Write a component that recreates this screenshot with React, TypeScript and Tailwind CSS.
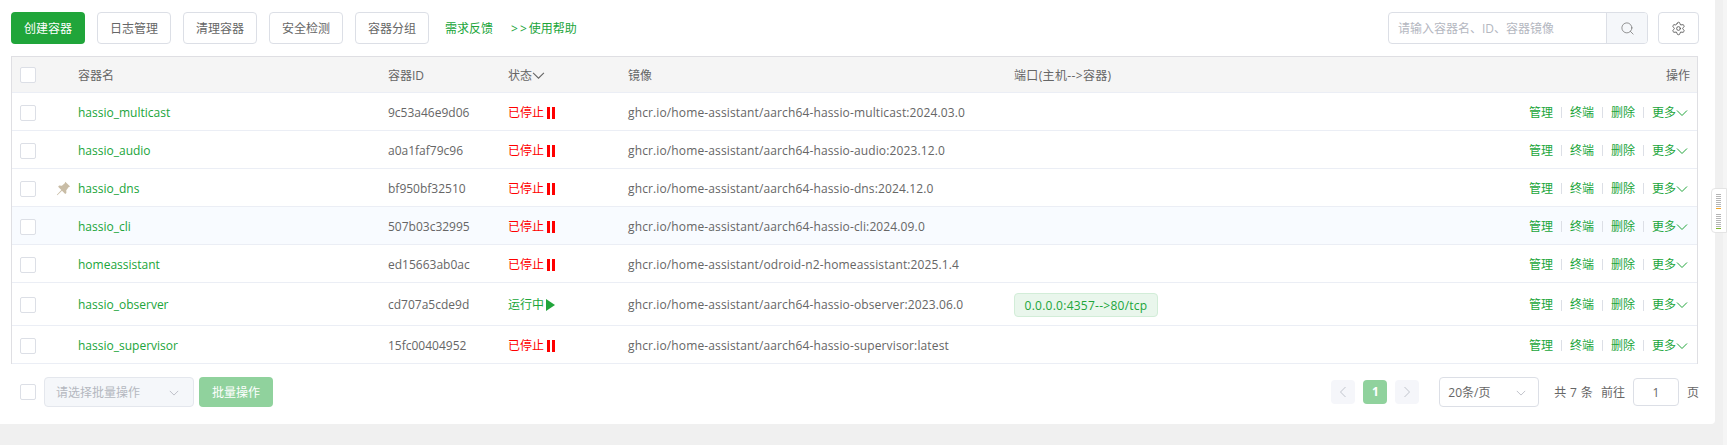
import React from "react";
import { Search, Settings } from "lucide-react";

const Chevron = ({ className = "" }: { className?: string }) => (
  <svg viewBox="0 0 12 12" className={className} fill="none" stroke="currentColor" strokeWidth="1">
    <path d="M1 3.5 6 8.5 11 3.5" />
  </svg>
);

const Check = () => <span className="block w-4 h-4 shrink-0 bg-white border border-[#dcdfe6] rounded-[2px]" />;

const Pin = () => (
  <svg viewBox="0 0 14 14" className="w-[15px] h-[15px]" fill="#c9bda6">
    <path d="M8.6.8 13.2 5.2 11.9 5.7 9.6 8.6 9.7 11.2 8.6 12.1 5.6 9 1.2 13.2.8 12.8 5 8.4 2 5.4 2.9 4.3 5.5 4.4 8.2 2.1Z" />
  </svg>
);

type Row = { name: string; id: string; image: string; run?: boolean; pin?: boolean; hover?: boolean };

const rows: Row[] = [
  { name: "hassio_multicast", id: "9c53a46e9d06", image: "ghcr.io/home-assistant/aarch64-hassio-multicast:2024.03.0" },
  { name: "hassio_audio", id: "a0a1faf79c96", image: "ghcr.io/home-assistant/aarch64-hassio-audio:2023.12.0" },
  { name: "hassio_dns", id: "bf950bf32510", image: "ghcr.io/home-assistant/aarch64-hassio-dns:2024.12.0", pin: true },
  { name: "hassio_cli", id: "507b03c32995", image: "ghcr.io/home-assistant/aarch64-hassio-cli:2024.09.0", hover: true },
  { name: "homeassistant", id: "ed15663ab0ac", image: "ghcr.io/home-assistant/odroid-n2-homeassistant:2025.1.4" },
  { name: "hassio_observer", id: "cd707a5cde9d", image: "ghcr.io/home-assistant/aarch64-hassio-observer:2023.06.0", run: true },
  { name: "hassio_supervisor", id: "15fc00404952", image: "ghcr.io/home-assistant/aarch64-hassio-supervisor:latest" },
];

const Status = ({ run }: { run?: boolean }) =>
  run ? (
    <span className="flex items-center text-[#20a53a]">
      运行中
      <svg viewBox="0 0 9 12" className="w-[9px] h-[12px] ml-[2px]" fill="#20a53a">
        <path d="M0 0 9 6 0 12Z" />
      </svg>
    </span>
  ) : (
    <span className="flex items-center text-[#ff0000]">
      已停止
      <span className="flex gap-[2px] ml-[3px]">
        <span className="w-[3px] h-3 bg-[#ff0000]" />
        <span className="w-[3px] h-3 bg-[#ff0000]" />
      </span>
    </span>
  );

const Sep = () => <span className="w-px h-[11px] bg-[#dcdfe6] mx-2" />;

const Actions = () => (
  <div className="flex items-center justify-end pr-[9px] text-[#20a53a]">
    <span>管理</span>
    <Sep />
    <span>终端</span>
    <Sep />
    <span>删除</span>
    <Sep />
    <span>更多</span>
    <Chevron className="w-3 h-3" />
  </div>
);

const gridCols = "grid grid-cols-[66px_310px_120px_120px_386px_300px_1fr] items-center";

const Btn = ({ children }: { children: React.ReactNode }) => (
  <button className="w-[74px] h-8 pt-[2px] bg-white border border-[#dcdfe6] rounded text-[#666]">{children}</button>
);

const grayLines = ["a", "b", "c", "d", "e", "f", "g"];

export default function App() {
  return (
    <div
      className="relative w-[1727px] h-[445px] overflow-hidden bg-[#f0f0f0] text-xs text-[#666]"
      style={{ fontFamily: '"Open Sans","Noto Sans CJK SC",sans-serif' }}
    >
      <div className="w-[1715px] h-[424px] bg-white rounded-br pl-[11px] pr-[17px]">
        <div className="flex justify-between items-center pt-3 -mr-px">
          <div className="flex items-center gap-3">
            <button className="w-[74px] h-8 pt-[2px] bg-[#20a53a] rounded text-white">创建容器</button>
            <Btn>日志管理</Btn>
            <Btn>清理容器</Btn>
            <Btn>安全检测</Btn>
            <Btn>容器分组</Btn>
            <span className="ml-1 pt-[2px] text-[#20a53a]">需求反馈</span>
            <span className="ml-[6px] pt-[2px] text-[#20a53a]">
              <span className="tracking-[2px]">&gt;&gt;</span>使用帮助
            </span>
          </div>
          <div className="flex items-center gap-[10px]">
            <div className="flex w-[260px] h-8 border border-[#dcdfe6] rounded overflow-hidden">
              <span className="flex-1 flex items-center pl-[9px] pt-[2px] text-[#b4b7bf]">请输入容器名、ID、容器镜像</span>
              <span className="w-[41px] flex items-center justify-center bg-[#f5f7fa] border-l border-[#dcdfe6]">
                <Search className="w-[15px] h-[15px] text-[#777]" strokeWidth={1.25} />
              </span>
            </div>
            <button className="w-[41px] h-8 flex items-center justify-center border border-[#dcdfe6] rounded text-[#555]">
              <Settings className="w-[15px] h-[15px]" strokeWidth={1.4} />
            </button>
          </div>
        </div>

        <div className="mt-3 border-x border-t border-[#dfdfe3]">
          <div className={`${gridCols} h-[36px] pt-[2px] bg-[#f5f5f5] border-b border-[#ebeef5]`}>
            <div className="pl-2 -mt-[2px]">
              <Check />
            </div>
            <div>容器名</div>
            <div>容器ID</div>
            <div className="flex items-center">
              状态
              <Chevron className="w-[13px] h-[13px]" />
            </div>
            <div>镜像</div>
            <div className="tracking-[0.35px]">端口(主机--&gt;容器)</div>
            <div className="text-right pr-[7px]">操作</div>
          </div>
          {rows.map((r) => (
            <div
              key={r.name}
              className={`${gridCols} ${r.run ? "h-[43px]" : "h-[38px]"} pt-[2px] border-b border-[#ebeef5] ${r.hover ? "bg-[#f8fbff]" : "bg-white"}`}
            >
              <div className="flex items-center pl-2">
                <Check />
                {r.pin && (
                  <span className="ml-[20px]">
                    <Pin />
                  </span>
                )}
              </div>
              <div className="text-[#20a53a]">{r.name}</div>
              <div>{r.id}</div>
              <div>
                <Status run={r.run} />
              </div>
              <div className="tracking-[0.13px]">{r.image}</div>
              <div>
                {r.run && (
                  <span className="inline-flex items-center justify-center w-[144px] h-6 pt-px tracking-[0.25px] bg-[#e9f6ec] border border-[#d2edd8] rounded text-[#20a53a]">
                    0.0.0.0:4357--&gt;80/tcp
                  </span>
                )}
              </div>
              <Actions />
            </div>
          ))}
        </div>

        <div className="flex items-center justify-between mt-[13px] h-[30px] -mr-px">
          <div className="flex items-center">
            <div className="pl-[9px]">
              <Check />
            </div>
            <div className="ml-2 w-[150px] h-[30px] flex items-center justify-between pl-[11px] pr-[14px] pt-[2px] bg-[#f5f7fa] border border-[#e4e7ed] rounded text-[#b4b7bf]">
              请选择批量操作
              <Chevron className="w-[10px] h-[10px] text-[#b4b7bf]" />
            </div>
            <button className="ml-[5px] w-[74px] h-[30px] pt-[2px] bg-[#90d29d] rounded text-white">批量操作</button>
          </div>
          <div className="flex items-center">
            <span className="w-6 h-6 flex items-center justify-center bg-[#f5f6fa] rounded-sm text-[#c0c4cc]">
              <Chevron className="w-3 h-3 rotate-90" />
            </span>
            <span className="w-6 h-6 ml-2 flex items-center justify-center bg-[#90d29d] rounded-sm text-white font-bold">1</span>
            <span className="w-6 h-6 ml-2 flex items-center justify-center bg-[#f5f6fa] rounded-sm text-[#c0c4cc]">
              <Chevron className="w-3 h-3 -rotate-90" />
            </span>
            <div className="ml-5 w-[100px] h-[30px] flex items-center justify-between pl-2 pr-3 pt-px border border-[#dcdfe6] rounded">
              20条/页
              <Chevron className="w-[10px] h-[10px] text-[#b4b7bf]" />
            </div>
            <span className="ml-[15px] pt-px whitespace-pre tracking-[0.3px]">共 7 条</span>
            <span className="ml-2 pt-px">前往</span>
            <span className="ml-2 w-[46px] h-7 pt-px flex items-center justify-center border border-[#dcdfe6] rounded">1</span>
            <span className="ml-2 pt-px">页</span>
          </div>
        </div>
      </div>

      <div className="absolute top-0 right-0 w-1 h-full bg-[#f5f5f5]" />
      <div className="absolute left-[1711px] top-[188px] w-4 h-[45px] bg-white border border-[#e4e4e4] rounded-l flex flex-col gap-px pt-[5px] pl-1">
        {grayLines.map((k) => (
          <span key={k} className="w-[5px] h-px bg-[#b5b5b5]" />
        ))}
        <span className="w-[5px] h-px bg-[#f5a623]" />
        {grayLines.map((k, i) => (
          <span key={k} className={`w-[5px] h-px bg-[#b5b5b5] ${i === 0 ? "mt-1" : ""}`} />
        ))}
        <span className="w-[5px] h-px bg-[#7db52a]" />
      </div>
    </div>
  );
}
